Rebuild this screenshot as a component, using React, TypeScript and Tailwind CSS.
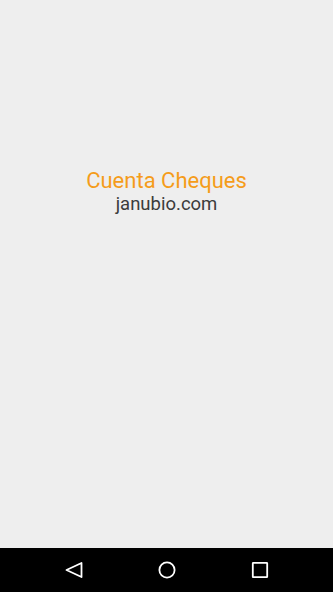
export default function App() {
  return (
    <div className="flex h-[592px] w-[333px] flex-col bg-[#eeeeee] font-['Roboto',sans-serif]">
      {/* splash */}
      <div className="flex flex-1 flex-col items-center pt-[168px]">
        <p className="text-[22px] leading-[26px] text-[#f59c1a]">Cuenta Cheques</p>
        <p className="text-[18.5px] leading-[20px] text-[#3c3c3c]">janubio.com</p>
      </div>

      {/* android nav bar */}
      <div className="flex h-[44px] items-center justify-center gap-[73px] bg-black">
        <svg width="20" height="20" viewBox="0 0 20 20" fill="none" stroke="white" strokeWidth="1.8" strokeLinejoin="round">
          <path d="M17.5 3 L2.5 10 L17.5 17 Z" />
        </svg>
        <svg width="20" height="20" viewBox="0 0 20 20" fill="none" stroke="white" strokeWidth="1.8">
          <circle cx="10" cy="10" r="7.6" />
        </svg>
        <svg width="20" height="20" viewBox="0 0 20 20" fill="none" stroke="white" strokeWidth="1.8">
          <rect x="2.8" y="2.8" width="14.4" height="14.4" rx="0.5" />
        </svg>
      </div>
    </div>
  );
}
